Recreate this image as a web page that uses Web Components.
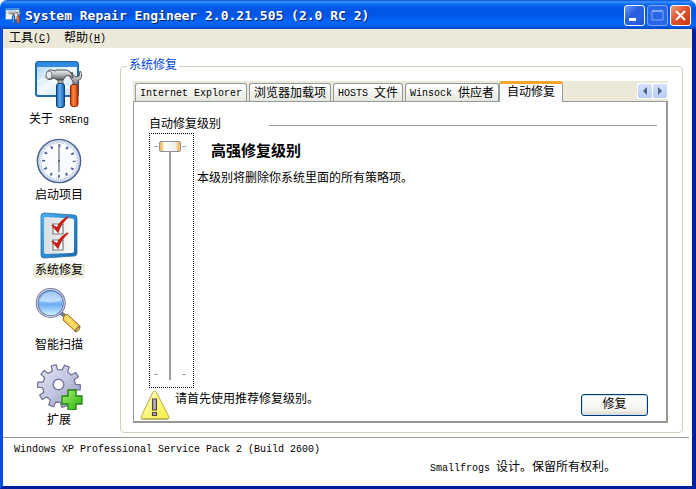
<!DOCTYPE html>
<html lang="zh-CN">
<head>
<meta charset="utf-8">
<title>System Repair Engineer</title>
<style>
  html, body { margin: 0; min-height: 100vh; }
  body { font: 12px/14px "Liberation Mono", "Noto Sans CJK SC", monospace; color: #000; background: #fff; }
</style>
</head>
<body>
<app-window></app-window>

<script>
const base = `*{box-sizing:border-box} button{font:inherit;color:inherit;background:none;border:0;padding:0;margin:0;white-space:nowrap;cursor:default}`;

function define(name, html) {
  const template = document.createElement('template');
  template.innerHTML = html;
  customElements.define(name, class extends HTMLElement {
    constructor() {
      super();
      this.attachShadow({ mode: 'open' }).append(template.content.cloneNode(true));
    }
  });
}

/* Outline of a ten-toothed wheel */
function gearPath(cx, cy, outer, inner) {
  const teeth = 10, points = [];
  for (let i = 0; i < teeth; i++) {
    for (const [offset, radius] of [[-0.27, inner], [-0.19, outer], [0.19, outer], [0.27, inner]]) {
      const angle = (i + offset + 0.1) * 2 * Math.PI / teeth;
      points.push((cx + radius * Math.cos(angle)).toFixed(2) + ' ' + (cy + radius * Math.sin(angle)).toFixed(2));
    }
  }
  return 'M' + points.join('L') + 'z';
}

/* Half-width text that sits among the full-width characters */
define('latin-text', `<style>:host{font-family:"Liberation Mono",monospace;font-size:10px;white-space:pre}</style><slot></slot>`);

const icons = {
  tools: `<svg viewBox="0 0 48 48"><defs>
    <linearGradient id="p" x1="0" y1="0" x2="1" y2="1"><stop offset="0" stop-color="#a6d2f6"/><stop offset=".5" stop-color="#f4fafe"/><stop offset="1" stop-color="#b9dbf5"/></linearGradient>
    <linearGradient id="s" x1="0" y1="0" x2="0" y2="1"><stop offset="0" stop-color="#f7f7f7"/><stop offset=".5" stop-color="#b0b2b5"/><stop offset="1" stop-color="#5a5d62"/></linearGradient>
    <linearGradient id="b"><stop offset="0" stop-color="#1859a8"/><stop offset=".4" stop-color="#5fb2f4"/><stop offset="1" stop-color="#1555a0"/></linearGradient>
    <linearGradient id="o"><stop offset="0" stop-color="#d23a08"/><stop offset=".4" stop-color="#ff8a42"/><stop offset="1" stop-color="#c62f04"/></linearGradient></defs>
    <rect x="1" y="1" width="42" height="34" rx="2.5" fill="url(#p)" stroke="#1e68b4" stroke-width="2"/>
    <path d="M1.500 6V3q0-1.700 2-1.700h37q2 0 2 1.700v3z" fill="#318be0"/><path d="M3 20c10-5 18 0 37 10" stroke="#fff" fill="none" stroke-width="1.2"/>
    <path d="M37 11c-3 3-2 7 1 9v6h5v-6c4-2 5-7 2-10l-1 5-3 1-3-2z" fill="url(#s)" stroke="#555" stroke-width="1"/>
    <path d="M23 18h5v7h-5z" fill="#aaa" stroke="#555" stroke-width=".8"/>
    <path d="M12 11c2-3 5-2 8-1l2-1h8c4 0 7 3 8 8-3-2-5-3-7-2l-3 4h-6l-3-2c-4 2-7 2-8-1z" fill="url(#s)" stroke="#44474b" stroke-width="1"/>
    <ellipse cx="14" cy="14" rx="3" ry="4" fill="#e9eaeb" stroke="#666" stroke-width=".8"/>
    <rect x="21.500" y="22.500" width="8" height="24" rx="2.5" fill="url(#b)" stroke="#123f78"/>
    <rect x="35.500" y="23.500" width="7.500" height="22" rx="2.5" fill="url(#o)" stroke="#8c2404"/></svg>`,
  clock: `<svg viewBox="0 0 48 48"><circle cx="24" cy="24" r="21.5" fill="#fafcff" stroke="#4b6291" stroke-width="1.7"/>
    <circle cx="24" cy="24" r="20" fill="none" stroke="#c4d1e8" stroke-width="1.4"/>
    <circle cx="24" cy="24" r="18.3" fill="none" stroke="#5c73a6" stroke-width="1" stroke-dasharray=".7 1.216"/>
    <circle cx="24" cy="24" r="15.3" fill="none" stroke="#4a639c" stroke-width="3" stroke-dasharray="1.9 6.111" stroke-dashoffset=".95"/>
    <path d="M24 7v28" stroke="#7b8494" stroke-width="1.4"/><circle cx="24" cy="24" r="1" fill="#44546f"/></svg>`,
  checklist: `<svg viewBox="0 0 48 48"><defs><linearGradient id="f" x1="0" y1="0" x2="1" y2="1"><stop stop-color="#4bb1f4"/><stop offset="1" stop-color="#1769af"/></linearGradient>
    <linearGradient id="g" x1="0" y1="0" x2="1" y2="0"><stop stop-color="#d7dde0"/><stop offset="1" stop-color="#fafbfb"/></linearGradient></defs>
    <path d="M9 1l30 2q3 0 3 3v35q0 3-3 3L9 46q-3 0-3-3V4q0-3 3-3z" fill="url(#f)" stroke="#256da8" stroke-width=".8"/>
    <path d="M11 5l26 1.500q2 0 2 2V39q0 2-2 2L11 42q-2 0-2-2V7q0-2 2-2z" fill="url(#g)"/>
    <path d="M18 12h10v10H18zM18 28h10v10H18z" fill="#fff" stroke="#75797c" stroke-width="1.2"/>
    <path d="M17 13l5 3c2-4 5-8 11-11-5 4-8 9-10 15zM17 29l5 3c2-4 5-8 11-11-5 4-8 9-10 15z" fill="#da2419" stroke="#c51d13" stroke-width="1.4"/></svg>`,
  magnifier: `<svg viewBox="0 0 48 48"><defs><linearGradient id="l" x1="0" y1="0" x2="0" y2="1"><stop stop-color="#5b9bf0"/><stop offset=".4" stop-color="#9ccafa"/><stop offset=".55" stop-color="#6cadf5"/><stop offset="1" stop-color="#dcfbff"/></linearGradient>
    <linearGradient id="h" x1="0" y1="1" x2="1" y2="0"><stop stop-color="#cf7e0a"/><stop offset=".5" stop-color="#ffe36b"/><stop offset="1" stop-color="#d98711"/></linearGradient></defs>
    <path d="M25 25l7 6" stroke="#777c91" stroke-width="4"/><path d="M32 27l13 12q1 4-4 6L28 33q0-5 4-6z" fill="url(#h)" stroke="#a3650d"/>
    <path d="M40 45q1-4 5-6" fill="none" stroke="#94785c" stroke-width="1.6"/>
    <circle cx="15.7" cy="16" r="13.6" fill="url(#l)" stroke="#626a94" stroke-width="2.8"/><circle cx="15.7" cy="16" r="13.6" fill="none" stroke="#c8cee8" stroke-width="1.2"/>
    <path d="M5 14C7 3 23 1 27 13c-7 3-15 3-22 1z" fill="#fff" opacity=".38"/></svg>`,
  gear: `<svg viewBox="0 0 48 48"><defs><linearGradient id="m" x1="0" y1="0" x2="1" y2="1"><stop stop-color="#e4e6f6"/><stop offset=".5" stop-color="#c3c7e1"/><stop offset="1" stop-color="#9297be"/></linearGradient>
    <linearGradient id="n" x1="0" y1="0" x2="1" y2="1"><stop stop-color="#abef72"/><stop offset="1" stop-color="#24b30a"/></linearGradient></defs>
    <path d="${gearPath(24, 24, 21.5, 16.5)}" fill="url(#m)" stroke="#6c708f" stroke-width="1.2" stroke-linejoin="round"/>
    <circle cx="23.5" cy="22.5" r="5.3" fill="#fff" stroke="#73779b" stroke-width="1.4"/>
    <path d="M33 28h8v6h6v8h-6v6h-8v-6h-6v-8h6z" fill="url(#n)" stroke="#23820e" stroke-width="1.3"/></svg>`,
  warning: `<svg viewBox="0 0 30 30"><defs><linearGradient id="w" x1="0" y1="0" x2="1" y2="1"><stop stop-color="#ffffc4"/><stop offset="1" stop-color="#f5ee3f"/></linearGradient></defs>
    <path d="M14.500 1q1.200 0 2 1.500L29 27q.600 2-1.400 2H2.400Q.400 29 1 27L12.700 2.500Q13.300 1 14.500 1z" fill="url(#w)" stroke="#b5ae49"/>
    <path d="M2 29h26" stroke="#a49d44"/>
    <path d="M12.500 9h4v11h-4zM12.500 22.500h4v3h-4z" fill="#a9a7c2" stroke="#57433a" stroke-width="1.1"/></svg>`
};

customElements.define('app-icon', class extends HTMLElement {
  constructor() { super(); this.attachShadow({ mode: 'open' }); }
  connectedCallback() {
    this.shadowRoot.innerHTML = `<style>:host{display:block;flex:none;width:var(--size,48px);height:var(--size,48px)}svg{display:block;width:100%;height:100%}</style>${icons[this.getAttribute('name')]}`;
  }
});

define('title-bar', `<style>${base}
  :host{display:flex;align-items:center;gap:4px;height:29px;padding:2px 5px 0 5px;color:#fff;
    background:linear-gradient(#0a4fd0 0,#3d95ff 2px,#0a6cf2 4px,#0058e6 8px,#0055e5 15px,#0465fb 21px,#0463f6 25px,#0046c8 29px);border-radius:7px 7px 0 0}
  app-icon{--size:16px}
  h1{flex:1;margin:0;font:bold 13px/18px "DejaVu Sans Mono",monospace;text-shadow:1px 1px #0a246a;white-space:nowrap}
  .controls{display:flex;gap:2px}
  button{width:21px;height:21px;border:1px solid #fff;border-radius:3px;background:linear-gradient(135deg,#6f9cf5,#2a5fe2 40%,#2a60e4 75%,#1c48b6)}
  button[disabled]{border-color:#7ea5f2;background:#2867e5}
  button.close{background:linear-gradient(135deg,#f0997c,#dd5530 45%,#c83510)}
  svg{display:block;width:19px;height:19px}</style>
  <app-icon name="tools"></app-icon><h1>System Repair Engineer 2.0.21.505 (2.0 RC 2)</h1>
  <div class="controls">
  <button aria-label="最小化"><svg><path d="M4 12h7v3H4z" fill="#fff"/></svg></button>
  <button aria-label="最大化" disabled><svg><path d="M4 5h11v9H4z" fill="none" stroke="#7ea5f2"/><path d="M4 5h11" stroke="#7ea5f2" stroke-width="2"/></svg></button>
  <button class="close" aria-label="关闭"><svg><path d="M5 5l9 9m0-9l-9 9" stroke="#fff" stroke-width="2"/></svg></button></div>`);

define('menu-bar', `<style>${base} :host{display:flex;gap:13px;height:19px;padding:1px 6px 0;background:#ece9d8} button{display:flex;align-items:center}</style>
  <button>工具<latin-text>(<u>C</u>)</latin-text></button><button>帮助<latin-text>(<u>H</u>)</latin-text></button>`);

define('nav-item', `<style>${base} :host{display:block} button{display:flex;flex-direction:column;align-items:center;gap:4px}
  span{padding:0 2px} :host([selected]) span{background:#f1eddc}</style>
  <button><slot name="icon"></slot><span><slot></slot></span></button>`);

define('side-nav', `<style>:host{display:flex;flex-direction:column;align-items:center;gap:9px;width:112px;flex:none;padding-top:13px}</style>
  <nav-item><app-icon slot="icon" name="tools"></app-icon>关于<latin-text> SREng</latin-text></nav-item>
  <nav-item><app-icon slot="icon" name="clock"></app-icon>启动项目</nav-item>
  <nav-item selected><app-icon slot="icon" name="checklist"></app-icon>系统修复</nav-item>
  <nav-item><app-icon slot="icon" name="magnifier"></app-icon>智能扫描</nav-item>
  <nav-item><app-icon slot="icon" name="gear"></app-icon>扩展</nav-item>`);

define('group-box', `<style>${base} :host{display:flex;flex:1;min-width:0}
  fieldset{display:flex;flex-direction:column;flex:1;min-width:0;margin:0;padding:8px 14px 9px 12px;border:1px solid #d0d0bf;border-radius:4px}
  legend{margin-left:-6px;padding:0 2px;color:#0046d5}</style>
  <fieldset><legend>系统修复</legend><slot></slot></fieldset>`);

define('tab-strip', `<style>${base}
  :host{display:flex;align-items:flex-end;height:20px;background:#ece9d8;padding-left:2px}
  .tabs{display:flex;align-items:flex-end;flex:1;gap:2px}
  .tabs button{display:flex;align-items:center;height:18px;padding:2px 4px 0;border:1px solid #919b9c;border-bottom:0;border-radius:3px 3px 0 0;background:linear-gradient(#fff,#f3f3ee 60%,#e4e6e0)}
  .tabs button[aria-selected=true]{height:21px;margin:0 0 -1px -2px;padding:0 7px 1px;border-top:3px solid #f7a52c;background:#fcfcfe;position:relative;z-index:1}
  .scroll{display:flex;align-self:center;background:#fff;padding:1px;gap:1px}
  .scroll button{width:14px;height:14px;border-radius:2px;background:linear-gradient(#d5e0fd,#b7cbf8)}
  svg{display:block;width:14px;height:14px}</style>
  <div class="tabs" role="tablist">
  <button role="tab"><latin-text>Internet Explorer</latin-text></button><button role="tab">浏览器加载项</button><button role="tab"><latin-text>HOSTS </latin-text>文件</button><button role="tab"><latin-text>Winsock </latin-text>供应者</button><button role="tab" aria-selected="true">自动修复</button></div>
  <div class="scroll"><button aria-label="向左"><svg><path d="M9 3v8L5 7z" fill="#4d6185"/></svg></button><button aria-label="向右"><svg><path d="M5 3v8l4-4z" fill="#4d6185"/></svg></button></div>`);

define('level-slider', `<style>${base}
  :host{box-sizing:border-box;display:flex;width:45px;padding:7px 4px 7px 9px;border:1px dotted #000;
    background:linear-gradient(#a5a5a0,#a5a5a0) left 4px top 12px/4px 1px no-repeat,linear-gradient(#a5a5a0,#a5a5a0) left 32px top 12px/4px 1px no-repeat,
    linear-gradient(#a5a5a0,#a5a5a0) left 4px bottom 12px/4px 1px no-repeat,linear-gradient(#a5a5a0,#a5a5a0) left 32px bottom 12px/4px 1px no-repeat}
  input{appearance:none;writing-mode:vertical-lr;direction:rtl;width:22px;height:auto;min-height:0;margin:0;background:linear-gradient(#9d9c99,#9d9c99) center/2px 100% no-repeat;outline:0}
  input::-webkit-slider-thumb{appearance:none;width:22px;height:11px;border:1px solid #8b9297;border-radius:2px;background:linear-gradient(90deg,#f3c16b 0 2px,#fff 4px,#eeede6 16px,#f3c16b 18px)}</style>
  <input type="range" min="0" max="1" value="1" aria-label="自动修复级别">`);

define('repair-panel', `<style>${base}
  :host{box-sizing:border-box;display:grid;grid-template-columns:45px 1fr;grid-template-rows:auto 1fr auto;column-gap:3px;flex:1;min-height:0;padding:15px 9px 0 15px;background:#fff;border:1px solid #919b9c;border-right:2px solid #989890;border-bottom:2px solid #989890}
  .heading{grid-column:1/3;display:flex;align-items:center;gap:48px;height:16px} .heading hr{flex:1;margin:0;border:0;border-top:1px solid #9d9da1}
  .description{padding-top:11px} h2{margin:0 0 10px 14px;font-size:15px;line-height:18px} p{margin:0}
  footer{grid-column:1/3;display:flex;gap:5px;margin-left:-9px;height:33px;padding-top:2px}
  footer app-icon{--size:30px} footer p{flex:1;padding-top:3px}
  footer button{width:67px;height:22px;margin:4px 9px 0 0;border:1px solid #003c74;border-radius:3px;background:linear-gradient(#fff,#f4f3ee 75%,#dcd7cb);box-shadow:inset 0 0 0 1px #cddff5}</style>
  <div class="heading"><span>自动修复级别</span><hr></div>
  <level-slider></level-slider>
  <div class="description"><h2>高强修复级别</h2><p>本级别将删除你系统里面的所有策略项。</p></div>
  <footer><app-icon name="warning"></app-icon><p>请首先使用推荐修复级别。</p><button>修复</button></footer>`);

define('status-bar', `<style>:host{display:flex;flex-direction:column;gap:4px;margin:4px 3px 0 0;padding:4px 73px 10px 11px;border-top:1px solid #9d9d98} p{margin:0} .credit{text-align:right}</style>
  <p><latin-text>Windows XP Professional Service Pack 2 (Build 2600)</latin-text></p><p class="credit"><latin-text>Smallfrogs </latin-text>设计。保留所有权利。</p>`);

define('app-window', `<style>*{box-sizing:border-box}
  :host{display:flex;flex-direction:column;min-height:100vh}
  .frame{display:flex;flex-direction:column;flex:1;border:solid;border-width:0 4px 3px 3px;border-color:#001ea0 #001ea0 #001ea0 #0a4be0}
  main{display:flex;flex:1;gap:5px;padding-right:9px} group-box{padding-top:11px}</style>
  <title-bar></title-bar>
  <div class="frame"><menu-bar></menu-bar>
    <main><side-nav></side-nav><group-box><tab-strip></tab-strip><repair-panel></repair-panel></group-box></main>
    <status-bar></status-bar></div>`);
</script>
</body>
</html>
